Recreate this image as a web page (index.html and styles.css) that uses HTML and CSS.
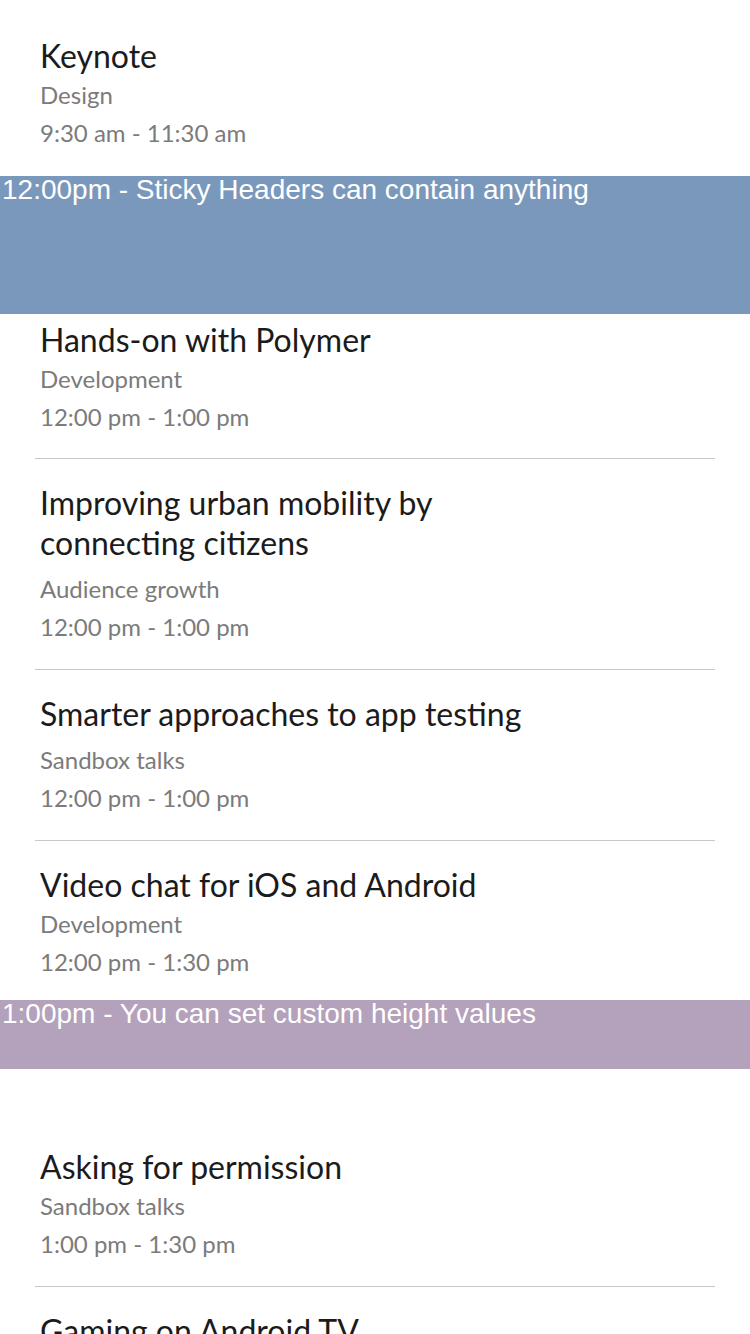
FILE: index.html
```html
<!DOCTYPE html>
<html>
<head>
<meta charset="utf-8">
<link rel="stylesheet" href="styles.css">
</head>
<body>
<div class="list">
  <div class="session session--first">
    <div class="title">Keynote</div>
    <div class="meta">Design</div>
    <div class="meta">9:30 am - 11:30 am</div>
  </div>
  <div class="header header--blue">12:00pm - Sticky Headers can contain anything</div>
  <div class="session session--after-header session--divided">
    <div class="title">Hands-on with Polymer</div>
    <div class="meta">Development</div>
    <div class="meta">12:00 pm - 1:00 pm</div>
  </div>
  <div class="session session--divided">
    <div class="title">Improving urban mobility by<br>connecting citizens</div>
    <div class="meta meta--spaced">Audience growth</div>
    <div class="meta">12:00 pm - 1:00 pm</div>
  </div>
  <div class="session session--divided">
    <div class="title">Smarter approaches to app testing</div>
    <div class="meta meta--spaced">Sandbox talks</div>
    <div class="meta">12:00 pm - 1:00 pm</div>
  </div>
  <div class="session session--last">
    <div class="title">Video chat for iOS and Android</div>
    <div class="meta">Development</div>
    <div class="meta">12:00 pm - 1:30 pm</div>
  </div>
  <div class="header header--purple">1:00pm - You can set custom height values</div>
  <div class="session session--after-tall session--divided">
    <div class="title">Asking for permission</div>
    <div class="meta">Sandbox talks</div>
    <div class="meta">1:00 pm - 1:30 pm</div>
  </div>
  <div class="session">
    <div class="title">Gaming on Android TV</div>
    <div class="meta">Development</div>
    <div class="meta">1:00 pm - 1:30 pm</div>
  </div>
</div>
</body>
</html>
```
FILE: styles.css
```css
html, body {
  margin: 0;
  padding: 0;
  background: #ffffff;
  overflow: hidden;
}
.list {
  display: flex;
  flex-direction: column;
  width: 750px;
}
.session {
  margin: 0 35px;
  padding: 24px 5px 23px;
  font-family: "Lato", "Noto Sans", sans-serif;
}
.session--first {
  padding-top: 36px;
  padding-bottom: 24px;
}
.session--after-header {
  padding-top: 6px;
  padding-bottom: 22px;
}
.session--last {
  padding-bottom: 19px;
}
.session--after-tall {
  padding-top: 78px;
}
.session--divided {
  border-bottom: 1px solid #c8c8c8;
}
.title {
  font-size: 32px;
  line-height: 40px;
  color: #1b1b1b;
}
.meta {
  font-size: 24px;
  line-height: 38px;
  color: #7b7b7b;
}
.meta--spaced {
  margin-top: 7px;
}
.header {
  font-family: "Liberation Sans", Arial, sans-serif;
  font-size: 28px;
  line-height: 28px;
  color: #ffffff;
  padding-left: 2px;
}
.header--blue {
  background: #7a98bc;
  height: 138px;
}
.header--purple {
  background: #b4a1bb;
  height: 69px;
}
```
